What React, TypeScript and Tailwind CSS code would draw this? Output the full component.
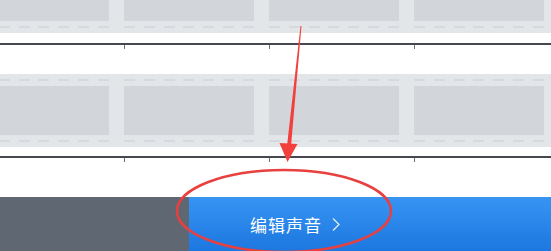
const FRAMES = [0, 1, 2, 3];

function DashRow() {
  return (
    <div className="flex justify-between w-[130px] h-[2px]">
      {[0, 1, 2, 3, 4, 5, 6].map(i => (
        <div key={i} className="w-[11px] h-[2px] bg-[#d6d9dd]" />
      ))}
    </div>
  );
}

function FilmStrip({ className = "" }: { className?: string }) {
  return (
    <div className={`bg-[#e3e6e9] h-[73px] pt-[5px] shrink-0 ${className}`}>
      <div className="flex gap-[15px] -ml-[21px]">
        {FRAMES.map(i => (
          <div key={i} className="flex flex-col gap-[5px] w-[130px] shrink-0">
            <DashRow />
            <div className="h-[49px] bg-[#d2d5da]" />
            <DashRow />
          </div>
        ))}
      </div>
    </div>
  );
}

function Ruler({ className = "" }: { className?: string }) {
  return (
    <div className={`shrink-0 ${className}`}>
      <div className="h-[2px] bg-[#45494f]" />
      <div className="flex gap-[15px] -ml-[21px]">
        {FRAMES.map(i => (
          <div key={i} className="w-[130px] shrink-0">
            <div className="w-px h-[4px] bg-[#6b6f75]" />
          </div>
        ))}
      </div>
    </div>
  );
}

export default function App() {
  return (
    <div className="relative w-[551px] h-[251px] overflow-hidden bg-white font-['Noto_Sans_CJK_SC',sans-serif]">
      <div className="flex flex-col h-full">
        <FilmStrip className="-mt-[40px]" />
        <Ruler className="mt-[10px]" />
        <FilmStrip className="mt-[25px]" />
        <Ruler className="mt-[9px]" />
        <div className="flex-1" />
        <div className="flex h-[54px] shrink-0">
          <div className="w-[189px] bg-[#5e6772]" />
          <div className="flex-1 flex items-center pl-[61px] bg-gradient-to-b from-[#3794f3] to-[#1c77df] text-white">
            <span className="text-[17px] leading-none tracking-[1px]">编辑声音</span>
            <svg width="10" height="15" viewBox="0 0 10 15" className="ml-[9px] mt-[1px]">
              <polyline points="2,1.5 8,7.5 2,13.5" fill="none" stroke="#ffffff" strokeOpacity="0.85" strokeWidth="1.3" />
            </svg>
          </div>
        </div>
      </div>

      {/* red annotation */}
      <svg className="absolute inset-0 pointer-events-none" width="551" height="251" viewBox="0 0 551 251">
        <polygon points="300.5,26 301.5,26 291,146 287,146" fill="#f2403d" />
        <polygon points="279.5,143 297.5,144 287.5,162" fill="#f2403d" />
        <ellipse cx="284" cy="211" rx="107" ry="41" fill="none" stroke="#e8403f" strokeWidth="2.5" />
      </svg>
    </div>
  );
}
